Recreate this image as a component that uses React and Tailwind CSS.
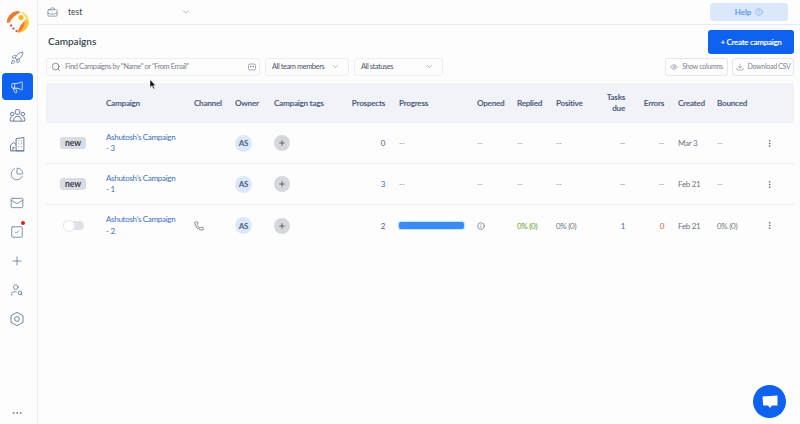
import { Rocket, Megaphone, ChartPie, Mail, SquareCheck, Plus, UserSearch, Search, ChevronDown, BriefcaseBusiness, CircleHelp, Eye, Download, Phone, Info, EllipsisVertical, Ellipsis } from "lucide-react";

const cols = "grid grid-cols-[60px_88px_41px_39px_70px_41px_92px_40px_39px_44px_25px_39px_53px_48px_29px] items-center";

function Logo() {
  return (
    <svg width="24" height="24" viewBox="0 0 24 24">
      <path d="M1 13C0.6 7 5.5 1.2 12.5 1L14.5 2.4C9.5 4.5 5.5 8 3.6 12.6Z" fill="#f0792a" />
      <path d="M14.5 1.3C19 2 23 6.5 23 11L20.5 8.5C18.5 6 16.5 4 14.5 1.3Z" fill="#f9dc6a" />
      <path d="M11.5 22.8C13 17 16 12.5 20.2 8.4L23 11.4C23 17.5 18 22.6 11.5 22.8Z" fill="#f7c33a" />
      <path d="M11.5 22.8C13 17.5 15.5 14 18.5 11.5C19 16 16 20.5 11.5 22.8Z" fill="#ef7a28" />
      <circle cx="15" cy="7.5" r="2.6" fill="#f5b81f" />
      <circle cx="5" cy="15.5" r="1.1" fill="#d9302a" />
      <circle cx="7.5" cy="18.5" r="1.1" fill="#d9302a" />
      <circle cx="10.5" cy="21" r="1.1" fill="#e0402a" />
    </svg>
  );
}

function GroupIcon({ size, strokeWidth }) {
  return (
    <svg width={size + 3} height={size + 3} viewBox="0 0 24 24" fill="none" stroke="currentColor" strokeWidth={strokeWidth}>
      <circle cx="12" cy="7" r="3.5" />
      <circle cx="4.5" cy="10" r="2.5" />
      <circle cx="19.5" cy="10" r="2.5" />
      <path d="M6.5 20C6.5 15 9 13 12 13S17.5 15 17.5 20Z" />
      <path d="M6 20H2C1 16 2 14 4.5 14M18 20H22C23 16 22 14 19.5 14" />
    </svg>
  );
}

function CompanyIcon({ size, strokeWidth }) {
  return (
    <svg width={size + 3} height={size + 3} viewBox="0 0 24 24" fill="none" stroke="currentColor" strokeWidth={strokeWidth}>
      <path d="M10 21V4L21 2V21Z" />
      <path d="M2 21V13L6.5 9L10 12" />
      <path d="M2 21H21M5.5 21V16H8M13.5 7H14.5M17 7H18M13.5 11H14.5M17 11H18M13.5 15H14.5M17 15H18" />
    </svg>
  );
}

function SettingsHex({ size, strokeWidth }) {
  return (
    <svg width={size + 2} height={size + 2} viewBox="0 0 24 24" fill="none" stroke="currentColor" strokeWidth={strokeWidth}>
      <path d="M12 2L21 7V17L12 22L3 17V7Z" strokeLinejoin="round" />
      <circle cx="12" cy="12" r="3.5" />
    </svg>
  );
}

function NavItem({ icon: Icon, active, dot }) {
  return (
    <div className="relative flex h-[29px] w-full items-center justify-center">
      <div className={"flex h-[27px] w-[31px] items-center justify-center rounded-[4px] " + (active ? "bg-[#0f62f0] text-white" : "text-[#5d6f91]")}>
        <Icon size={14} strokeWidth={1.3} />
      </div>
      {dot && <span className="absolute right-[9px] top-[4px] h-[4px] w-[4px] rounded-full bg-[#e0201c]" />}
    </div>
  );
}

function Dash() {
  return <span className="text-[#8a8f99]">--</span>;
}

function Badge() {
  return <span className="rounded-[3px] bg-[#d9dce2] px-[5px] py-px text-[8.5px] font-bold leading-[10px] tracking-normal text-[#3a3f4a]">new</span>;
}

function Toggle() {
  return (
    <div className="flex h-[9px] w-[21px] items-center rounded-full bg-[#dfe1e6]">
      <span className="h-[12px] w-[12px] rounded-full border border-[#e6e7ea] bg-white" />
    </div>
  );
}

function Row({ first, no, channel, prospects, prospectsBlue, progress, opened, replied, positive, tasks, errors, created, bounced, last }) {
  return (
    <div className={cols + " h-[41px] text-[8px] tracking-[-0.3px] text-[#6d7480] " + (last ? "" : "border-b border-[#eceef2]")}>
      <div className="flex justify-center pr-[6px]">{first}</div>
      <div className="whitespace-nowrap leading-[11.5px] text-[#3c70b8]">Ashutosh's Campaign<br />- {no}</div>
      <div>{channel && <Phone size={10} strokeWidth={1.4} className="text-[#3a3f4a]" />}</div>
      <div>
        <span className="flex h-[17px] w-[17px] items-center justify-center rounded-full bg-[#dbe8fb] text-[8px] font-bold text-[#4d5b7c]">AS</span>
      </div>
      <div>
        <span className="flex h-[16px] w-[16px] items-center justify-center rounded-full bg-[#d5d7dc] text-[#30343c]">
          <Plus size={8} strokeWidth={2} />
        </span>
      </div>
      <div className={"text-right " + (prospectsBlue ? "text-[#3c70b8]" : "text-[#555b66]")}>{prospects}</div>
      <div className="pl-[14px]">
        {progress ? <div className="h-[7px] w-[65px] rounded-[2px] bg-[#3b8bf2] shadow-[0_0_1px_1px_#b8e4fb]" /> : <Dash />}
      </div>
      <div>{opened ? <Info size={8} strokeWidth={1.5} className="text-[#3a3f4a]" /> : <Dash />}</div>
      <div>{replied ? <span className="text-[#5ba32b]">{replied}</span> : <Dash />}</div>
      <div>{positive || <Dash />}</div>
      <div className="text-right">{tasks ? <span className="text-[#3c70b8]">{tasks}</span> : <Dash />}</div>
      <div className="text-right">{errors ? <span className="text-[#d0592f]">{errors}</span> : <Dash />}</div>
      <div className="pl-[14px]">{created}</div>
      <div>{bounced || <Dash />}</div>
      <div><EllipsisVertical size={9} strokeWidth={1.6} className="text-[#3a3f4a]" /></div>
    </div>
  );
}

function Select({ label, width }) {
  return (
    <div className={"flex h-[18px] items-center justify-between rounded-[3px] border border-[#eceef0] pl-[6px] pr-[8px] text-[7.5px] tracking-[-0.45px] text-[#4d5566] " + width}>
      <span className="whitespace-nowrap">{label}</span>
      <ChevronDown size={9} strokeWidth={1.2} className="shrink-0 text-[#5d6f91]" />
    </div>
  );
}

export default function App() {
  return (
    <div className="relative flex h-screen w-full overflow-hidden bg-[#fdfdfe] font-['Lato',sans-serif]">
      <aside className="flex w-[38px] shrink-0 flex-col items-center border-r border-[#eceef2] pr-[3px] pb-[5px]">
        <div className="flex h-[43px] items-center justify-center pl-[1px]"><Logo /></div>
        <NavItem icon={Rocket} />
        <NavItem icon={Megaphone} active />
        <NavItem icon={GroupIcon} />
        <NavItem icon={CompanyIcon} />
        <NavItem icon={ChartPie} />
        <NavItem icon={Mail} />
        <NavItem icon={SquareCheck} dot />
        <NavItem icon={Plus} />
        <NavItem icon={UserSearch} />
        <NavItem icon={SettingsHex} />
        <div className="mt-auto text-[#5d6f91]"><Ellipsis size={12} strokeWidth={1.5} /></div>
      </aside>

      <main className="flex min-w-0 flex-1 flex-col">
        <header className="flex h-[25px] shrink-0 items-center border-b border-[#e8eaee] pl-[9px] pr-[12px]">
          <BriefcaseBusiness size={11} strokeWidth={1.2} className="text-[#4d5b7c]" />
          <span className="ml-[10px] text-[8.5px] text-[#3a3f4a]">test</span>
          <ChevronDown size={10} strokeWidth={1.2} className="ml-[99px] text-[#5d6f91]" />
          <div className="ml-auto -mt-[1px] flex h-[18px] w-[78px] items-center justify-center gap-[4px] rounded-[3px] bg-[#dbe8fb] text-[8px] font-semibold text-[#4f8be8]">
            Help <CircleHelp size={8} strokeWidth={1.3} />
          </div>
        </header>

        <div className="flex flex-1 flex-col pl-[8px] pr-[6px] pt-[5px]">
          <div className="flex h-[24px] items-center justify-between pl-[2px]">
            <h1 className="-mt-[1px] text-[10px] font-semibold text-[#37474f]">Campaigns</h1>
            <button className="h-[24px] w-[86px] rounded-[3px] bg-[#0f62f0] text-[8px] font-bold tracking-[-0.3px] text-white">+ Create campaign</button>
          </div>

          <div className="mt-[3px] flex h-[19px] items-center gap-[5px]">
            <div className="flex h-[18px] w-[214px] items-center rounded-[3px] border border-[#eceef0] pl-[4px] pr-[3px] text-[7.5px] tracking-[-0.45px] text-[#7c828d]">
              <Search size={10} strokeWidth={1.5} className="text-[#4d5566]" />
              <span className="ml-[4px] whitespace-nowrap">Find Campaigns by "Name" or "From Email"</span>
              <svg className="ml-auto text-[#7c828d]" width="8" height="8" viewBox="0 0 8 8" fill="none" stroke="currentColor" strokeWidth="0.7">
                <rect x="0.5" y="1" width="7" height="6" rx="1.5" />
                <circle cx="2.7" cy="3.5" r="0.5" fill="currentColor" />
                <circle cx="5.3" cy="3.5" r="0.5" fill="currentColor" />
              </svg>
            </div>
            <Select label="All team members" width="w-[84px]" />
            <Select label="All statuses" width="w-[89px]" />
            <div className="ml-auto flex h-[18px] w-[63px] items-center justify-center gap-[4px] whitespace-nowrap rounded-[3px] border border-[#e6e7ea] text-[7px] tracking-[-0.3px] text-[#7c828d]">
              <Eye size={8} strokeWidth={1.2} className="text-[#4d5566]" /> Show columns
            </div>
            <div className="-ml-[1px] flex h-[18px] w-[62px] items-center justify-center gap-[4px] whitespace-nowrap rounded-[3px] border border-[#e6e7ea] text-[7px] tracking-[-0.3px] text-[#7c828d]">
              <Download size={8} strokeWidth={1.2} className="text-[#4d5566]" /> Download CSV
            </div>
          </div>

          <div className={cols + " mt-[7px] h-[40px] bg-[#f1f3f8] text-[8.2px] font-bold leading-[11px] tracking-[-0.3px] text-[#4d5b7c]"}>
            <div />
            <div>Campaign</div>
            <div>Channel</div>
            <div>Owner</div>
            <div className="whitespace-nowrap">Campaign tags</div>
            <div className="text-right">Prospects</div>
            <div className="pl-[14px]">Progress</div>
            <div>Opened</div>
            <div>Replied</div>
            <div>Positive</div>
            <div className="text-right">Tasks<br />due</div>
            <div className="text-right">Errors</div>
            <div className="pl-[14px]">Created</div>
            <div>Bounced</div>
            <div />
          </div>

          <Row first={<Badge />} no={3} prospects="0" created="Mar 3" />
          <Row first={<Badge />} no={1} prospects="3" prospectsBlue created="Feb 21" />
          <Row first={<Toggle />} no={2} channel prospects="2" progress opened replied="0% (0)" positive="0% (0)" tasks="1" errors="0" created="Feb 21" bounced="0% (0)" last />
        </div>
      </main>

      <svg className="absolute left-[149px] top-[79px]" width="7" height="11" viewBox="0 0 7 11">
        <path d="M1 0.5V8.5L3 6.8L4.4 10L5.6 9.4L4.3 6.4H6.6Z" fill="#111" stroke="#fff" strokeWidth="0.5" />
      </svg>

      <div className="absolute bottom-[6px] right-[14px] flex h-[33px] w-[33px] items-center justify-center rounded-full bg-[#0f62f0]">
        <svg width="16" height="14" viewBox="0 0 16 14">
          <path d="M0.5 1.5L15.5 0.5V10.5H10L8 13L6 10.5H1.2Z" fill="#fff" />
        </svg>
      </div>
    </div>
  );
}
